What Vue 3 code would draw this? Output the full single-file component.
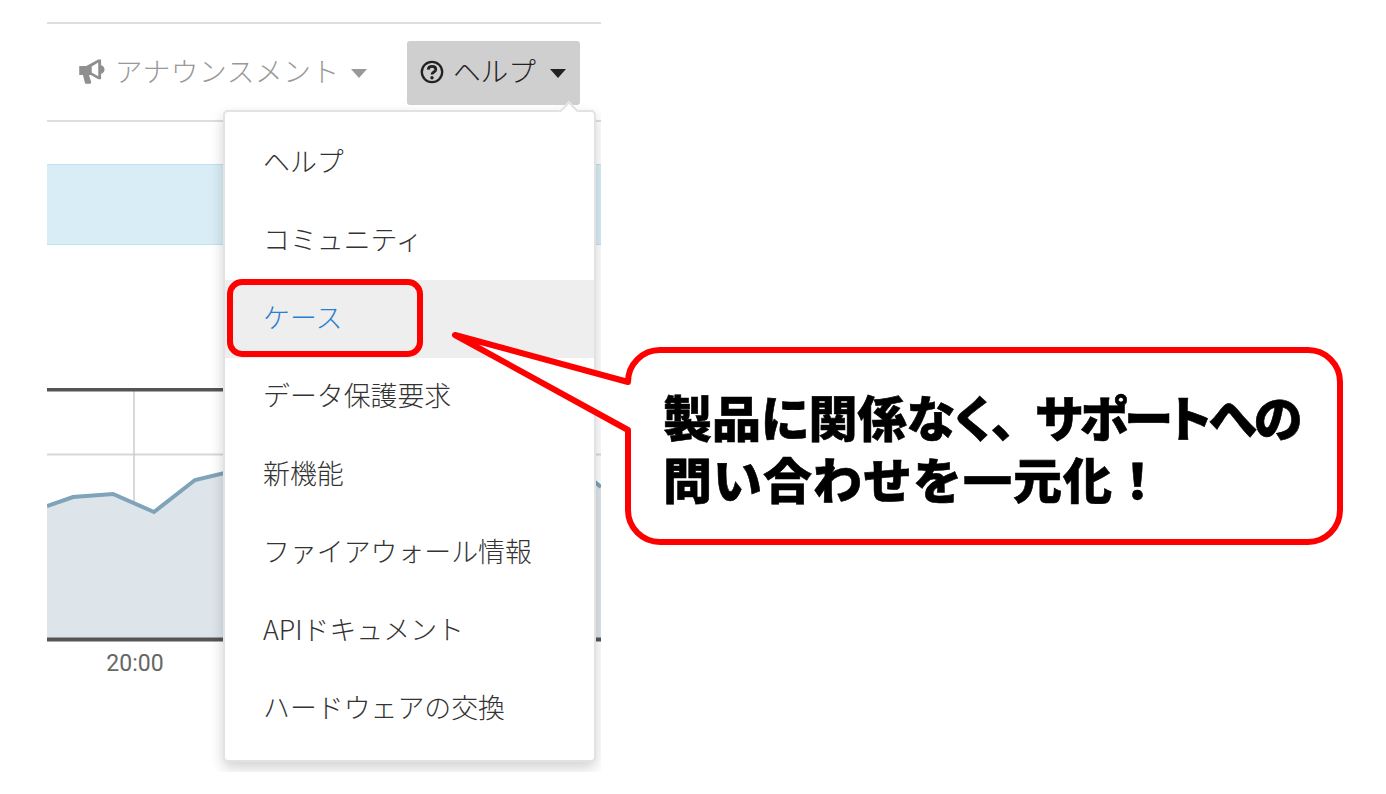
<script setup>
const items = [
  { label: 'ヘルプ' },
  { label: 'コミュニティ' },
  { label: 'ケース', active: true },
  { label: 'データ保護要求' },
  { label: '新機能' },
  { label: 'ファイアウォール情報' },
  { label: 'APIドキュメント' },
  { label: 'ハードウェアの交換' }
]
</script>

<template>
  <div class="page">
    <div class="shot">
      <nav class="nav">
        <a class="nav-link">
          <svg class="bullhorn" viewBox="1 1 23.500 23" aria-hidden="true">
            <path fill="#8f8f8f" d="M1 7.500h6.500L18.500 1.500h2.600v5.200c1.800.4 3.200 2 3.200 3.900s-1.400 3.500-3.200 3.900v5.200h-2.600L11.800 15.800H10l2 6.700c.2.700-.3 1.300-1 1.300H7.300c-.5 0-.9-.3-1-.8L4.400 15.800H1z"/>
            <path fill="#fff" d="M12.500 7.800l6-3.500v12.500l-6-3.400z"/>
          </svg>
          <span class="wide">アナウンスメント</span>
          <i class="caret near"></i>
        </a>
        <a class="nav-link open">
          <svg class="question" viewBox="0 0 24 24" aria-hidden="true">
            <circle cx="12" cy="12" r="10.200" fill="none" stroke="#222" stroke-width="2.300"/>
            <path fill="none" stroke="#222" stroke-width="2.800" d="M8.200 9.600c.2-2.100 1.700-3.200 3.800-3.200s3.800 1.100 3.800 3c0 2.700-3.800 2.500-3.800 5.200"/>
            <circle cx="12" cy="17.700" r="1.700" fill="#222"/>
          </svg>
          <span>ヘルプ</span>
          <i class="caret"></i>
        </a>
      </nav>

      <div class="alert"></div>

      <section class="chart">
        <svg class="plot" viewBox="0 0 554 254" preserveAspectRatio="none" aria-hidden="true">
          <path d="M0 66.500H554" stroke="#d8d8d8" stroke-width="2"/>
          <path d="M87 2V120" stroke="#cdcdcd" stroke-width="1.500"/>
          <path fill="#dde5eb" d="M0 118L26 109L66 106L107 124L148 92L190 82L500 82L548 94L554 99V252H0z"/>
          <path fill="none" stroke="#7fa3b8" stroke-width="4" d="M0 118L26 109L66 106L107 124L148 92L190 82L500 82L548 94L554 99"/>
          <path d="M0 1.500H554M0 251.500H554" stroke="#555" stroke-width="4"/>
        </svg>
        <div class="axis"><span>20:00</span></div>
      </section>

      <div class="menu">
        <i class="arrow"></i>
        <a v-for="item in items" :key="item.label" class="menu-item" :class="{ active: item.active }">{{ item.label }}</a>
      </div>
    </div>

    <div class="highlight"></div>

    <svg class="balloon-shape" viewBox="0 0 1386 794" aria-hidden="true">
      <path fill="#fff" stroke="#f00" stroke-width="6" stroke-linejoin="round" d="M628 382A32 32 0 0 1 660 350H1308A32 32 0 0 1 1340 382V510A32 32 0 0 1 1308 542H660A32 32 0 0 1 628 510V430L455 335Z"/>
    </svg>
    <div class="balloon-text">
      <div class="line-one">製品に関係なく、<span class="tight">サポートへの</span></div>
      <div class="line-two">問い合わせを一元化！</div>
    </div>
  </div>
</template>

<style>
html, body { margin: 0; background: #fff; }
</style>

<style scoped>
.page {
  position: relative;
  width: 1386px;
  height: 794px;
  overflow: hidden;
  background: #fff;
  padding-left: 47px;
  box-sizing: border-box;
  font-family: "Noto Sans CJK JP", Roboto, sans-serif;
  font-weight: 300;
  color: #333;
}
.shot {
  position: relative;
  width: 554px;
  height: 772px;
  overflow: hidden;
  background: #fff;
  padding-top: 22px;
  box-sizing: border-box;
}
.nav {
  display: flex;
  justify-content: flex-end;
  align-items: flex-start;
  height: 64px;
  padding: 17px 21px 15px 0;
  border-top: 2px solid #dcdce2;
  border-bottom: 2px solid #dedede;
  gap: 40px;
  margin-bottom: 42px;
}
.nav-link {
  display: flex;
  align-items: center;
  height: 64px;
  font-size: 27.700px;
  color: #999;
}
.nav-link span { margin-bottom: 7px; }
.nav-link .wide { letter-spacing: 0.600px; }
.nav-link.open {
  background: #cfcfcf;
  border-radius: 3px;
  padding: 0 14px 0 13px;
  color: #222;
}
.bullhorn { width: 26px; height: 25px; margin-right: 10px; margin-top: -4px; }
.question { width: 24px; height: 24px; margin-right: 9px; margin-top: -2px; }
.caret {
  width: 0;
  height: 0;
  margin-left: 14px;
  border-left: 8px solid transparent;
  border-right: 8px solid transparent;
  border-top: 9px solid currentColor;
}
.caret.near { margin-left: 11px; }
.alert {
  height: 79px;
  background: #d9edf6;
  border-top: 1px solid #bce4f0;
  border-bottom: 1px solid #bce4f0;
}
.chart { margin-top: 143px; }
.plot { display: block; width: 554px; height: 254px; }
.axis {
  width: 176px;
  text-align: center;
  font-family: Roboto, sans-serif;
  font-weight: 400;
  font-size: 23px;
  color: #666;
  margin-top: 8px;
}
.menu {
  position: absolute;
  left: 176px;
  top: 110px;
  width: 373px;
  height: 652px;
  box-sizing: border-box;
  padding: 12px 0;
  display: flex;
  flex-direction: column;
  background: #fff;
  border: 2px solid #e2e2e2;
  border-radius: 5px;
  box-shadow: 0 6px 14px rgba(0, 0, 0, 0.18);
}
.arrow {
  position: absolute;
  right: 18px;
  top: -8px;
  width: 12px;
  height: 12px;
  background: #fff;
  border-left: 2px solid #e2e2e2;
  border-top: 2px solid #e2e2e2;
  transform: rotate(45deg);
}
.menu-item {
  position: relative;
  height: 78px;
  line-height: 74px;
  padding-left: 38px;
  font-size: 26.900px;
  color: #333;
  white-space: nowrap;
}
.menu-item.active {
  background: #eee;
  color: #2a7fd0;
}
.highlight {
  position: absolute;
  left: 227px;
  top: 279px;
  width: 196px;
  height: 78px;
  box-sizing: border-box;
  border: 6px solid #f00;
  border-radius: 15px;
}
.balloon-shape {
  position: absolute;
  left: 0;
  top: 0;
  width: 1386px;
  height: 794px;
}
.balloon-text {
  position: absolute;
  left: 663px;
  top: 385px;
  font-size: 49px;
  line-height: 62px;
  font-weight: 900;
  color: #000;
  -webkit-text-stroke: 0.600px #000;
  white-space: nowrap;
}
.line-one { font-feature-settings: "palt"; }
.line-one .tight { letter-spacing: -2.500px; margin-left: 20px; }
.line-two { letter-spacing: 1px; }
</style>
